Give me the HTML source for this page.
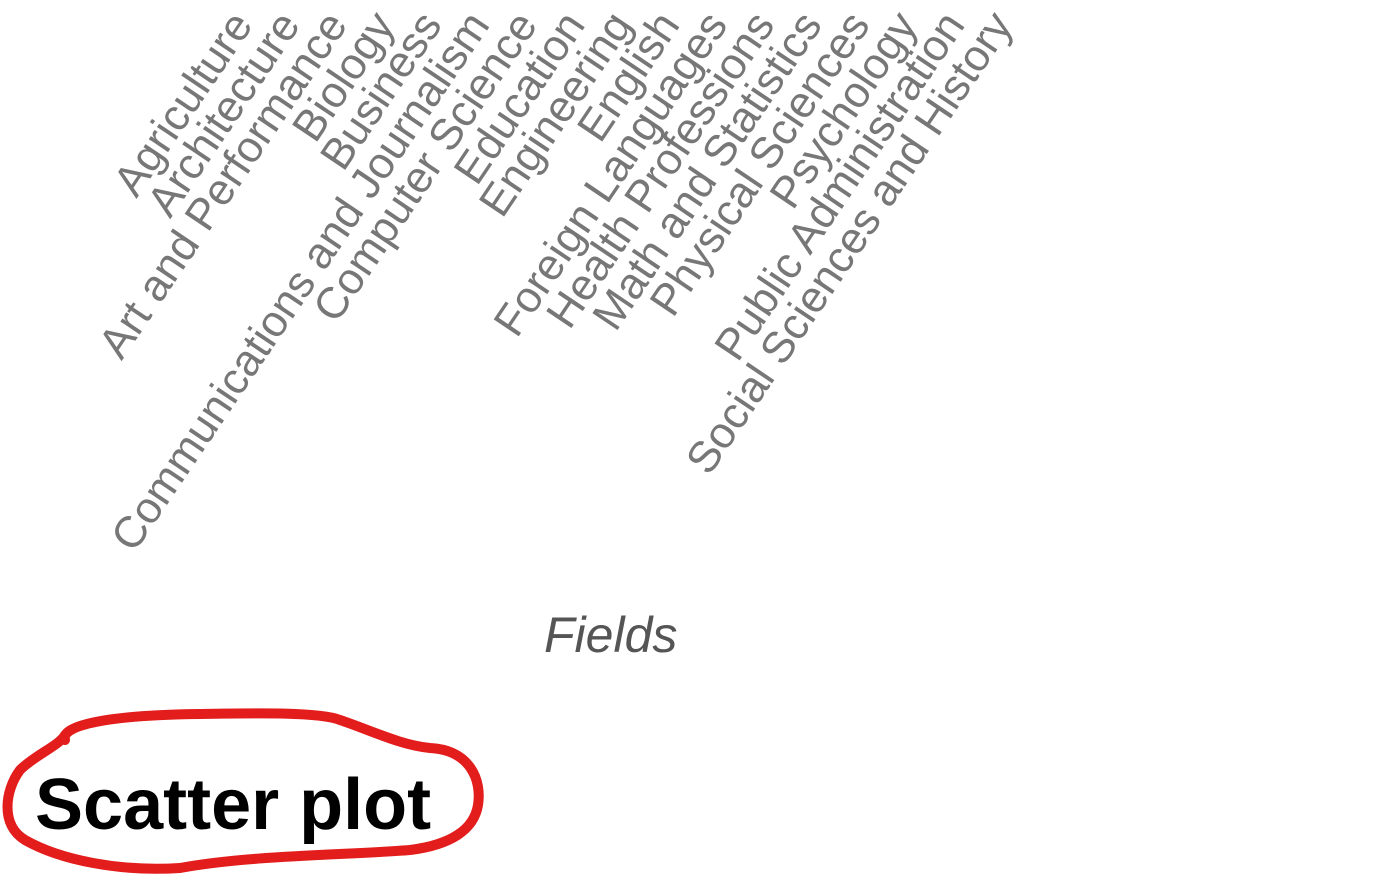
<!DOCTYPE html>
<html><head><meta charset="utf-8"><style>
html,body{margin:0;padding:0;background:#fff;width:1379px;height:880px;overflow:hidden;position:relative;font-family:"Liberation Sans",Arial,sans-serif}
.l{position:absolute;white-space:nowrap;font-size:44px;color:#777;line-height:42px;transform-origin:100% 50%;transform:rotate(-56deg)}
.f{position:absolute;left:544px;top:606px;font-size:50px;font-style:italic;color:#555}
.s{position:absolute;left:35px;top:765px;font-size:72px;font-weight:bold;color:#000;line-height:80px}
</style></head><body>
<div id="c"></div>
<div class="f">Fields</div>
<svg style="position:absolute;left:0;top:0" width="1379" height="880">
<path d="M65 740 C 60 725, 110 715, 200 714 C 260 713, 320 712, 340 720 C 370 730, 400 745, 430 748 C 470 750, 482 780, 478 805 C 474 830, 450 845, 410 850 C 350 855, 250 855, 180 868 C 120 872, 60 860, 25 840 C 0 825, 5 790, 20 770 C 35 755, 60 745, 65 735" fill="none" stroke="#e31c1c" stroke-width="10" stroke-linecap="round"/>
</svg>
<div class="s">Scatter plot</div>
<script>
var L=["Agriculture","Architecture","Art and Performance","Biology","Business","Communications and Journalism","Computer Science","Education","Engineering","English","Foreign Languages","Health Professions","Math and Statistics","Physical Sciences","Psychology","Public Administration","Social Sciences and History"];
var h="";
for(var i=0;i<L.length;i++){var x=242+47.5*i;h+='<div class="l" style="right:'+(1379-x)+'px;top:-4px">'+L[i]+'</div>';}
document.getElementById("c").innerHTML=h;
</script>
</body></html>
